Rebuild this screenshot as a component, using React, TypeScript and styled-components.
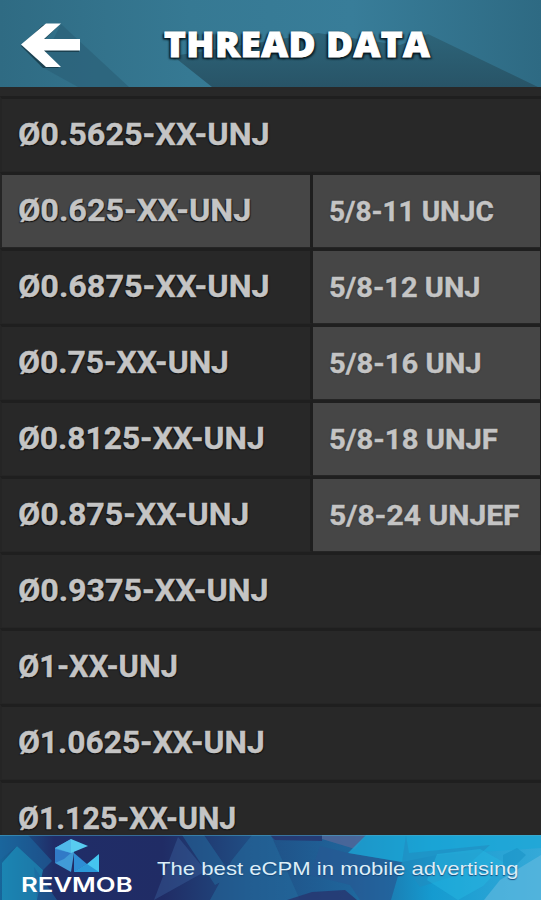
import React, { useLayoutEffect, useRef, useState } from 'react';
import styled, { createGlobalStyle } from 'styled-components';

const GlobalStyle = createGlobalStyle`
  * { box-sizing: border-box; }
  html, body { margin: 0; padding: 0; background: #282828; overflow: hidden; }
`;

const Screen = styled.main`
  width: 541px;
  height: 900px;
  display: flex;
  flex-direction: column;
  overflow: hidden;
  background: #282828;
`;

const Header = styled.header`
  position: relative;
  flex: 0 0 87px;
  display: flex;
  align-items: center;
  overflow: hidden;
  background: #35748e;
`;

const Backdrop = styled.svg`
  position: absolute;
  inset: 0;
  width: 100%;
  height: 100%;
`;

const BackButton = styled.button`
  position: relative;
  width: 164px;
  height: 87px;
  padding: 0;
  border: 0;
  background: none;
  display: block;
  svg { display: block; }
`;

const Title = styled.h1`
  position: relative;
  margin: 1px 0 0;
  font: 800 36px/44px 'Open Sans', sans-serif;
  letter-spacing: 0.5px;
  color: #fff;
  -webkit-text-stroke: 1px #fff;
  text-shadow: -2px 2px 2px #071820, 2px 2px 2px #0b2029, -1px 0 2px #0b2029;
`;

const Content = styled.section`
  flex: 1 1 0;
  min-height: 0;
  display: grid;
  grid-template-columns: 313px 228px;
  grid-auto-rows: 76px;
  padding-top: 9px;
  overflow: hidden;
`;

const Cell = styled.div<{ $selected?: boolean; $wide?: boolean; $detail?: boolean }>`
  grid-column: ${(p) => (p.$detail ? 2 : p.$wide ? '1 / 3' : 1)};
  display: flex;
  align-items: center;
  height: 76px;
  border-top: 3px solid #1f1f1f;
  border-bottom: 1px solid #252525;
  border-left: ${(p) => (p.$detail ? '0' : '2px')} solid #252525;
  border-right: ${(p) => (p.$detail ? '1px' : p.$wide ? '0' : '3px')} solid #1e1e1e;
  padding-left: 16px;
  background: ${(p) => (p.$selected || p.$detail ? '#464646' : '#282828')};
`;

const Label = styled.span<{ $detail?: boolean }>`
  margin-top: ${(p) => (p.$detail ? '1px' : '-2px')};
  font: 700 ${(p) => (p.$detail ? '28px' : '32px')}/28px Roboto, sans-serif;
  color: #c4c4c4;
  -webkit-text-stroke: 0.4px #c4c4c4;
  text-shadow: ${(p) => (p.$detail ? '0 0 2px #292929' : '-1px 1px 1px #111, 1px 1px 1px #111')};
`;

const Banner = styled.footer`
  position: relative;
  flex: 0 0 65px;
  display: flex;
  align-items: flex-start;
  overflow: hidden;
  background: #202c65;
`;

const Brand = styled.div`
  position: relative;
  width: 157px;
  height: 65px;
  padding-left: 21px;
  display: flex;
  flex-direction: column;
`;

const BrandMark = styled.svg`
  width: 46px;
  height: 35px;
  margin: 3px 0 0 33px;
`;

const BrandName = styled.strong`
  font: 600 20px/24px Inter, sans-serif;
  color: #fff;
`;

const Tagline = styled.p`
  position: relative;
  margin: 21px 0 0;
  font: 400 19px/26px 'Liberation Sans', Arial, sans-serif;
  color: #dceef8;
  text-shadow: 0 1px 1px #174678;
`;

const Fitted = styled.span`
  display: inline-block;
  white-space: pre;
  transform-origin: left center;
`;

// Stretches a line of text horizontally to the requested width.
function Fit({ width, children }: { width: number; children: string }) {
  const ref = useRef<HTMLSpanElement>(null);
  const [scale, setScale] = useState(1);
  useLayoutEffect(() => {
    if (ref.current) setScale(width / ref.current.offsetWidth);
  }, [width, children]);
  return <Fitted ref={ref} style={{ transform: `scaleX(${scale})` }}>{children}</Fitted>;
}

const sizes = [
  { name: 'Ø0.5625-XX-UNJ', width: 252 },
  { name: 'Ø0.625-XX-UNJ', width: 233 },
  { name: 'Ø0.6875-XX-UNJ', width: 252 },
  { name: 'Ø0.75-XX-UNJ', width: 211 },
  { name: 'Ø0.8125-XX-UNJ', width: 247 },
  { name: 'Ø0.875-XX-UNJ', width: 231 },
  { name: 'Ø0.9375-XX-UNJ', width: 251 },
  { name: 'Ø1-XX-UNJ', width: 160 },
  { name: 'Ø1.0625-XX-UNJ', width: 247 },
  { name: 'Ø1.125-XX-UNJ', width: 218 },
];

const threads = [
  { name: '5/8-11 UNJC', width: 165 },
  { name: '5/8-12 UNJ', width: 152 },
  { name: '5/8-16 UNJ', width: 153 },
  { name: '5/8-18 UNJF', width: 169 },
  { name: '5/8-24 UNJEF', width: 191 },
];

export default function App() {
  return (
    <>
      <GlobalStyle />
      <Screen>
        <Header>
          <Backdrop viewBox="0 0 541 87" preserveAspectRatio="none">
            <defs>
              <linearGradient id="head" x1="0" x2="1">
                <stop offset="0" stopColor="#2f6b83" />
                <stop offset=".35" stopColor="#367993" />
                <stop offset=".65" stopColor="#387d99" />
                <stop offset="1" stopColor="#2e6a83" />
              </linearGradient>
              <linearGradient id="shade" x1="0" y1="0" x2="0" y2="1">
                <stop offset="0" stopColor="#2d6479" />
                <stop offset="1" stopColor="#285467" />
              </linearGradient>
            </defs>
            <path fill="url(#head)" d="M0 0h541v87H0z" />
            <path fill="#2c637b" opacity=".8" d="M61 24 129 87H78L40 66z" />
            <path fill="url(#shade)" d="M173 56 212 87H538L428 34 400 45 318 33z" />
          </Backdrop>
          <BackButton aria-label="Back">
            <svg width="164" height="87" viewBox="0 0 164 87">
              <path d="M21 46 43 25H59L44 40H79V52H44L59 68H43Z" fill="#12303d" opacity=".7" />
              <path d="M21 44.5 46 23.5H61L44 39H80V50.5H44L61 67H46Z" fill="#fff" />
            </svg>
          </BackButton>
          <Title><Fit width={266}>THREAD DATA</Fit></Title>
        </Header>
        <Content>
          {sizes.map((item, i) => {
            const thread = threads[i - 1];
            return (
              <React.Fragment key={item.name}>
                <Cell $selected={i === 1} $wide={!thread}>
                  <Label><Fit width={item.width}>{item.name}</Fit></Label>
                </Cell>
                {thread && (
                  <Cell $detail>
                    <Label $detail><Fit width={thread.width}>{thread.name}</Fit></Label>
                  </Cell>
                )}
              </React.Fragment>
            );
          })}
        </Content>
        <Banner>
          <Backdrop viewBox="0 0 541 65" preserveAspectRatio="none">
            <defs>
              <linearGradient id="ad" x1="0" x2="1">
                <stop offset="0" stopColor="#17669a" />
                <stop offset=".1" stopColor="#202d68" />
                <stop offset=".3" stopColor="#202c65" />
                <stop offset=".46" stopColor="#204d83" />
                <stop offset=".65" stopColor="#1f659b" />
                <stop offset=".8" stopColor="#159bd0" />
                <stop offset="1" stopColor="#35a9d8" />
              </linearGradient>
            </defs>
            <path fill="url(#ad)" d="M0 0h541v65H0z" />
            <path fill="#1d93bd" opacity=".7" d="M2 28 17 11 43 35 37 65H2z" />
            <path fill="#1c659e" opacity=".6" d="M0 0H28L52 26 43 35 17 11 0 25zM34 32 57 65H37z" />
            <path fill="#3b63a0" opacity=".4" d="M178 2 206 36 154 65z" />
            <path fill="#246d9f" opacity=".5" d="M182 0H204L232 41 215 50zM232 25 252 0H271L300 65H210z" />
            <path fill="#27346e" opacity=".8" d="M270 0H322V6L275 5zM287 65 312 57 345 55 357 65z" />
            <path fill="#536698" opacity=".8" d="M322 0H366L355 14 322 4z" />
            <path fill="#275893" opacity=".7" d="M320 11 348 18 402 27 391 65H360L350 50 310 40z" />
            <path fill="#1ca7d7" opacity=".75" d="M366 0H541V13L437 20 402 27 348 18z" />
            <path fill="#218cc0" opacity=".6" d="M406 0 409 18 490 10 457 40 420 52 402 27z" />
            <path fill="#25b9e3" opacity=".45" d="M437 19 480 14 505 28 483 51 458 65 427 45z" />
            <path fill="#61b9df" opacity=".65" d="M541 20 500 45 484 65H541z" />
            <path fill="#168fc3" opacity=".5" d="M503 20 517 13 526 20 515 31 503 34z" />
            <path stroke="#4eabc7" opacity=".5" d="M0 .5H541" />
          </Backdrop>
          <Brand>
            <BrandMark viewBox="0 0 46 35">
              <path fill="#419bd7" d="M1 10 17 1 20 15 17 34 1 25z" />
              <path fill="#58ccf0" d="M17 1 34 8 17 15z" />
              <path fill="#317ac7" d="M1 11 17 15 10 21 1 25z" />
              <path fill="#50b9e9" d="M17 1V15L1 10z" />
              <path fill="#2e8dd5" d="M20 15 33 26 20 34z" />
              <path fill="#45c5ef" d="M45 16V34H20L33 26z" />
              <path fill="#2b98d8" d="M20 34 33 26 45 34z" />
            </BrandMark>
            <BrandName><Fit width={112}>REVMOB</Fit></BrandName>
          </Brand>
          <Tagline><Fit width={361}>The best eCPM in mobile advertising</Fit></Tagline>
        </Banner>
      </Screen>
    </>
  );
}
